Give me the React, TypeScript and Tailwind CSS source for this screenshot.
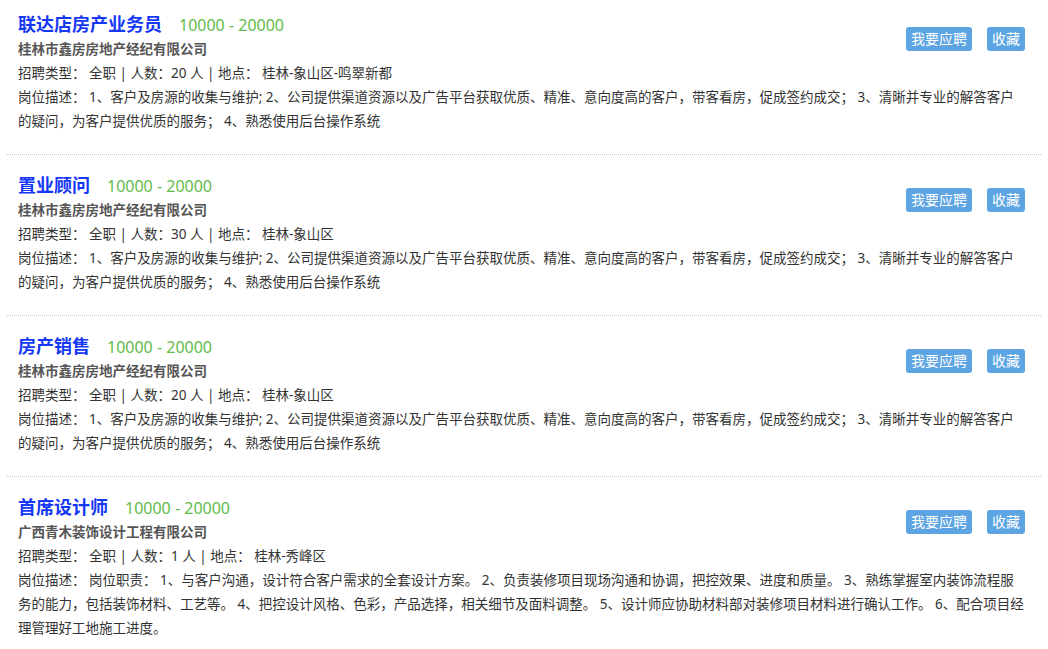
const jobs = [
  {
    title: "联达店房产业务员",
    salary: "10000 - 20000",
    company: "桂林市鑫房房地产经纪有限公司",
    count: "20",
    place: "桂林-象山区-鸣翠新都",
    desc: "1、客户及房源的收集与维护; 2、公司提供渠道资源以及广告平台获取优质、精准、意向度高的客户，带客看房，促成签约成交； 3、清晰并专业的解答客户的疑问，为客户提供优质的服务； 4、熟悉使用后台操作系统",
  },
  {
    title: "置业顾问",
    salary: "10000 - 20000",
    company: "桂林市鑫房房地产经纪有限公司",
    count: "30",
    place: "桂林-象山区",
    desc: "1、客户及房源的收集与维护; 2、公司提供渠道资源以及广告平台获取优质、精准、意向度高的客户，带客看房，促成签约成交； 3、清晰并专业的解答客户的疑问，为客户提供优质的服务； 4、熟悉使用后台操作系统",
  },
  {
    title: "房产销售",
    salary: "10000 - 20000",
    company: "桂林市鑫房房地产经纪有限公司",
    count: "20",
    place: "桂林-象山区",
    desc: "1、客户及房源的收集与维护; 2、公司提供渠道资源以及广告平台获取优质、精准、意向度高的客户，带客看房，促成签约成交； 3、清晰并专业的解答客户的疑问，为客户提供优质的服务； 4、熟悉使用后台操作系统",
  },
  {
    title: "首席设计师",
    salary: "10000 - 20000",
    company: "广西青木装饰设计工程有限公司",
    count: "1",
    place: "桂林-秀峰区",
    desc: "岗位职责： 1、与客户沟通，设计符合客户需求的全套设计方案。 2、负责装修项目现场沟通和协调，把控效果、进度和质量。 3、熟练掌握室内装饰流程服务的能力，包括装饰材料、工艺等。 4、把控设计风格、色彩，产品选择，相关细节及面料调整。 5、设计师应协助材料部对装修项目材料进行确认工作。 6、配合项目经理管理好工地施工进度。",
  },
];

export default function App() {
  return (
    <main className="min-h-screen w-full bg-white px-[7px] font-['Noto_Sans','Noto_Sans_CJK_SC',sans-serif] text-[#333]">
      {jobs.map((job) => (
        <div
          key={job.title}
          className="border-b border-dotted border-[#c8c8c8] pb-[21px] pl-[11px] pr-[16px] pt-[17px] first:pt-[11px]"
        >
          <div className="float-right mt-[16px] flex gap-[15px]">
            <button className="h-[24px] rounded-[3px] bg-[#5ca5e2] px-[5px] text-[14px] leading-[24px] text-white">
              我要应聘
            </button>
            <button className="h-[24px] rounded-[3px] bg-[#5ca5e2] px-[5px] text-[14px] leading-[24px] text-white">
              收藏
            </button>
          </div>
          <div className="flex h-[26px] items-baseline leading-[26px]">
            <span className="text-[18px] font-bold text-[#1538f5]">{job.title}</span>
            <span className="ml-[17px] text-[16px] text-[#62bb4a]">{job.salary}</span>
          </div>
          <div className="h-[24px] text-[13.5px] font-bold leading-[24px] text-[#555]">{job.company}</div>
          <div className="h-[24px] text-[13.5px] leading-[24px]">
            招聘类型： 全职 | 人数：{job.count} 人 | 地点： {job.place}
          </div>
          <div className="text-[13.5px] leading-[24px]">岗位描述： {job.desc}</div>
        </div>
      ))}
    </main>
  );
}
